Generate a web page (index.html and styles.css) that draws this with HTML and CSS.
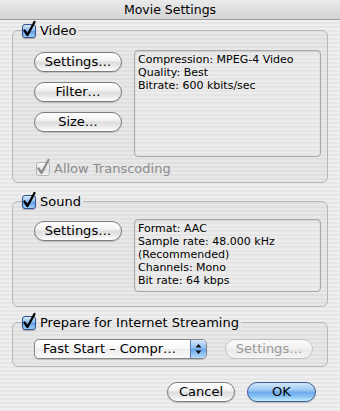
FILE: index.html
```html
<!DOCTYPE html>
<html lang="en">
<head>
    <meta charset="UTF-8">
    <meta name="viewport" content="width=device-width, initial-scale=1.0">
    <title>Movie Settings</title>
    <link rel="stylesheet" href="styles.css">
</head>
<body>
    <div class="window">
        <div class="titlebar">Movie Settings</div>

        <div class="content">
            <fieldset class="group group-video">
                <legend>
                    <span class="check"><svg viewBox="0 0 14 14" width="14" height="14"><path d="M2.5 6.5 L5.5 11 L12.5 -2" /></svg></span>Video
                </legend>
                <div class="group-row">
                    <div class="button-col">
                        <button class="aqua-btn">Settings…</button>
                        <button class="aqua-btn">Filter…</button>
                        <button class="aqua-btn">Size…</button>
                    </div>
                    <div class="summary summary-video">Compression: MPEG-4 Video<br>Quality: Best<br>Bitrate: 600 kbits/sec</div>
                </div>
                <div class="sub-check">
                    <span class="check disabled"><svg viewBox="0 0 14 14" width="14" height="14"><path d="M2.5 6.5 L5.5 11 L12.5 -2" /></svg></span>Allow Transcoding
                </div>
            </fieldset>

            <fieldset class="group group-sound">
                <legend>
                    <span class="check"><svg viewBox="0 0 14 14" width="14" height="14"><path d="M2.5 6.5 L5.5 11 L12.5 -2" /></svg></span>Sound
                </legend>
                <div class="group-row">
                    <div class="button-col">
                        <button class="aqua-btn">Settings…</button>
                    </div>
                    <div class="summary summary-sound">Format: AAC<br>Sample rate: 48.000 kHz<br>(Recommended)<br>Channels: Mono<br>Bit rate: 64 kbps</div>
                </div>
            </fieldset>

            <fieldset class="group group-stream">
                <legend>
                    <span class="check"><svg viewBox="0 0 14 14" width="14" height="14"><path d="M2.5 6.5 L5.5 11 L12.5 -2" /></svg></span>Prepare for Internet Streaming
                </legend>
                <div class="stream-row">
                    <div class="popup">
                        <span class="popup-label">Fast Start – Compr…</span>
                        <span class="popup-arrows">
                            <svg viewBox="0 0 7 12" width="7" height="12"><path d="M3.5 1 L6.5 4.5 L0.5 4.5 Z M3.5 11 L6.5 7.5 L0.5 7.5 Z" /></svg>
                        </span>
                    </div>
                    <button class="aqua-btn" disabled>Settings…</button>
                </div>
            </fieldset>

            <div class="footer">
                <button class="aqua-btn small">Cancel</button>
                <button class="aqua-btn small default">OK</button>
            </div>
        </div>
    </div>
</body>
</html>
```

FILE: styles.css
```css
body {
    margin: 0;
    padding: 0;
    font-family: "DejaVu Sans", "Liberation Sans", sans-serif;
    color: #000;
}

.window {
    width: 340px;
    height: 411px;
    overflow: hidden;
    background: repeating-linear-gradient(to bottom, #eeeeee 0, #eeeeee 2px, #e6e6e6 2px, #e6e6e6 4px);
}

.titlebar {
    height: 19px;
    line-height: 19px;
    text-align: center;
    font-size: 12.5px;
    background: linear-gradient(#eaeaea, #d4d4d4);
    border-bottom: 1px solid #9c9c9c;
}

.content {
    padding: 4px 12px 0 12px;
}

.group {
    margin: 0;
    min-width: 0;
    border: 1px solid #b6b6b6;
    border-radius: 6px;
    padding: 0 6px 6px 21px;
    background: rgba(0, 0, 0, 0.025);
}

.group legend {
    display: flex;
    align-items: flex-start;
    height: 12px;
    margin-left: -12px;
    padding: 0 2px 0 0;
    font-size: 13px;
    line-height: 14px;
}

.check {
    display: flex;
    flex-shrink: 0;
    width: 14px;
    height: 14px;
    box-sizing: border-box;
    margin-right: 4px;
    border: 1px solid #30528c;
    border-radius: 3px;
    background: linear-gradient(#d8e9fb, #8dbdf0 45%, #5f9de6 52%, #9fd0fa);
    box-shadow: 0 1px 1px rgba(0, 0, 0, 0.25);
}

.check svg {
    overflow: visible;
    margin: -1px 0 0 -1px;
}

.check svg path {
    fill: none;
    stroke: #000;
    stroke-width: 2.3;
    stroke-linecap: round;
    stroke-linejoin: round;
}

.check.disabled {
    border-color: #b4b4b4;
    background: linear-gradient(#fbfbfb, #e8e8e8 50%, #dedede 52%, #f4f4f4);
    box-shadow: none;
}

.check.disabled svg path {
    stroke: #8e8e8e;
}

.group-video {
    padding-top: 14px;
}

.group-sound {
    margin-top: 12px;
    padding-top: 12px;
    padding-bottom: 14px;
}

.group-stream {
    margin-top: 9px;
    padding-top: 11px;
    padding-bottom: 7px;
}

.group-row {
    display: flex;
    gap: 12px;
}

.button-col {
    display: flex;
    flex-direction: column;
    gap: 10px;
    margin-top: 2px;
}

.aqua-btn {
    width: 88px;
    height: 20px;
    padding: 0;
    border: 1px solid #7c7c7c;
    border-radius: 10px;
    background: linear-gradient(#ffffff, #f3f3f3 40%, #dedede 52%, #e9e9e9 75%, #ffffff);
    box-shadow: 0 1px 1px rgba(0, 0, 0, 0.18);
    font-family: "DejaVu Sans", sans-serif;
    font-size: 13px;
    line-height: 18px;
    color: #000;
}

.aqua-btn:disabled {
    border-color: #c2c2c2;
    background: linear-gradient(#fafafa, #f1f1f1 50%, #e9e9e9 52%, #f5f5f5);
    box-shadow: none;
    color: #9a9a9a;
}

.summary {
    width: 187px;
    box-sizing: border-box;
    padding: 2px 3px;
    border: 1px solid #a8a8a8;
    border-radius: 4px;
    background: rgba(255, 255, 255, 0.18);
    box-shadow: inset 0 1px 2px rgba(0, 0, 0, 0.12);
    font-size: 11px;
    line-height: 13px;
}

.summary-video {
    height: 107px;
}

.summary-sound {
    height: 73px;
}

.sub-check {
    display: flex;
    margin: 5px 0 0 2px;
    font-size: 13px;
    line-height: 14px;
    color: #8c8c8c;
}

.stream-row {
    display: flex;
    gap: 18px;
}

.popup {
    display: flex;
    width: 173px;
    height: 20px;
    box-sizing: border-box;
    border: 1px solid #858585;
    border-radius: 5px;
    overflow: hidden;
    background: linear-gradient(#ffffff, #f6f6f6 50%, #ececec 52%, #fafafa);
    box-shadow: 0 1px 1px rgba(0, 0, 0, 0.18);
}

.popup-label {
    flex: 1;
    padding-left: 8px;
    font-size: 13px;
    line-height: 18px;
}

.popup-arrows {
    display: flex;
    align-items: center;
    justify-content: center;
    width: 15px;
    border-left: 1px solid #5a7bb5;
    background: linear-gradient(#d3e6fb, #90c0f1 45%, #69a6ea 52%, #b5dcfc);
}

.popup-arrows svg path {
    fill: #111;
}

.footer {
    display: flex;
    justify-content: flex-end;
    gap: 12px;
    margin-top: 15px;
    padding-right: 12px;
}

.aqua-btn.small {
    width: 68px;
}

.aqua-btn.default {
    width: 69px;
    border-color: #3e5b93;
    background: linear-gradient(#d4e7fc, #9cc8f3 40%, #6fabec 52%, #87c1f4 75%, #c4ecff);
}
```
